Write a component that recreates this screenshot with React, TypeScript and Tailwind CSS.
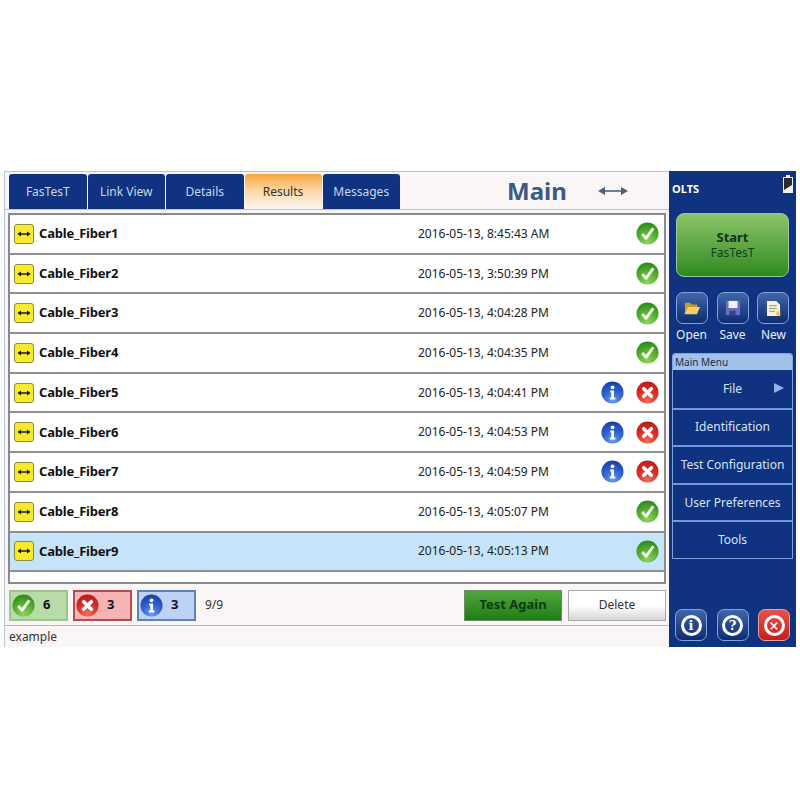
import React from 'react';

const FONT = 'font-["Noto_Sans","DejaVu_Sans",sans-serif]';

const tabs = ['FasTesT', 'Link View', 'Details', 'Results', 'Messages'];

const rows = [
  { name: 'Cable_Fiber1', date: '2016-05-13, 8:45:43 AM', ok: true },
  { name: 'Cable_Fiber2', date: '2016-05-13, 3:50:39 PM', ok: true },
  { name: 'Cable_Fiber3', date: '2016-05-13, 4:04:28 PM', ok: true },
  { name: 'Cable_Fiber4', date: '2016-05-13, 4:04:35 PM', ok: true },
  { name: 'Cable_Fiber5', date: '2016-05-13, 4:04:41 PM', ok: false },
  { name: 'Cable_Fiber6', date: '2016-05-13, 4:04:53 PM', ok: false },
  { name: 'Cable_Fiber7', date: '2016-05-13, 4:04:59 PM', ok: false },
  { name: 'Cable_Fiber8', date: '2016-05-13, 4:05:07 PM', ok: true },
  { name: 'Cable_Fiber9', date: '2016-05-13, 4:05:13 PM', ok: true },
];

const menu = ['File', 'Identification', 'Test Configuration', 'User Preferences', 'Tools'];

function Ball({ id, light, mid, dark, children }: { id: string; light: string; mid: string; dark: string; children: React.ReactNode }) {
  return (
    <svg viewBox="0 0 24 24" className="w-[23px] h-[23px] shrink-0">
      <defs>
        <radialGradient id={id} cx="50%" cy="88%" r="85%">
          <stop offset="0%" stopColor={light} />
          <stop offset="55%" stopColor={mid} />
          <stop offset="100%" stopColor={dark} />
        </radialGradient>
      </defs>
      <circle cx="12" cy="12" r="11.5" fill={`url(#${id})`} />
      {children}
    </svg>
  );
}

function OkIcon() {
  return (
    <Ball id="ok" light="#8fd35a" mid="#55b02f" dark="#2f8a1f">
      <path d="M6.5 12.5l4 4.5 7.5-10.5" fill="none" stroke="#fff" strokeWidth="3" strokeLinejoin="round" opacity="0.95" />
    </Ball>
  );
}

function FailIcon() {
  return (
    <Ball id="fail" light="#f26a5c" mid="#d9322a" dark="#b71c1c">
      <path d="M8 8l8 8M16 8l-8 8" stroke="#fff" strokeWidth="3.6" strokeLinecap="round" />
    </Ball>
  );
}

function InfoIcon() {
  return (
    <Ball id="info" light="#6a9bf0" mid="#2f62d0" dark="#1a3fa8">
      <circle cx="12" cy="6.6" r="2" fill="#fff" />
      <path d="M9.6 10h3.9v7.2h1.5v2H9.2v-2h1.5v-5.2H9.6z" fill="#fff" />
    </Ball>
  );
}

function CableTag() {
  return (
    <div className="w-[20px] h-[20px] shrink-0 rounded-[3px] border border-[#8a8a40] bg-[#fbe92e] flex items-center justify-center">
      <svg viewBox="0 0 14 8" className="w-[14px] h-[8px]">
        <path d="M3 4h8" stroke="#111" strokeWidth="1.4" />
        <path d="M0.5 4L4 1.4v5.2zM13.5 4L10 1.4v5.2z" fill="#111" />
      </svg>
    </div>
  );
}

function FolderIcon() {
  return (
    <svg viewBox="0 0 20 18" className="w-[18px] h-[16px]">
      <path d="M2 3h6l1.5 2H16v3H5L2 15z" fill="#c99a2e" />
      <path d="M5 8h14l-3.5 8H1.5z" fill="#f5cf62" />
    </svg>
  );
}

function SaveIcon() {
  return (
    <svg viewBox="0 0 18 18" className="w-[16px] h-[16px]">
      <path d="M1 1h16v16H1z" fill="#6a6fc4" />
      <path d="M4 1h10v8H4z" fill="#f2f2fa" />
      <path d="M5 12h7v5H5z" fill="#3d3f8c" />
    </svg>
  );
}

function NewIcon() {
  return (
    <svg viewBox="0 0 16 18" className="w-[15px] h-[17px]">
      <path d="M1 1h10l4 4v12H1z" fill="#f4f1dc" />
      <path d="M3.5 6h8M3.5 9h8M3.5 12h6" stroke="#8f8f78" strokeWidth="1" />
      <path d="M13 12v5M10.5 14.5h5" stroke="#e8c330" strokeWidth="1.8" />
    </svg>
  );
}

function SquareButton({ red, children }: { red?: boolean; children: React.ReactNode }) {
  return (
    <div
      className={`w-[32px] h-[32px] rounded-[7px] border flex items-center justify-center ${
        red
          ? 'border-[#e8a0a0] bg-gradient-to-b from-[#e8504a] to-[#c81a1a]'
          : 'border-[#7fa4dc] bg-gradient-to-b from-[#3f66ac] to-[#0d2c70]'
      }`}
    >
      {children}
    </div>
  );
}

function RingGlyph({ glyph }: { glyph: string }) {
  return (
    <div className={`w-[21px] h-[21px] rounded-full border-[3px] border-white bg-transparent flex items-center justify-center text-white text-[13px] font-bold leading-none font-["DejaVu_Serif",serif]`}>
      {glyph}
    </div>
  );
}

function Badge({ cls, count, children }: { cls: string; count: number; children: React.ReactNode }) {
  return (
    <div className={`w-[59px] h-[31px] border-2 flex items-center pl-[1px] gap-[8px] ${cls}`}>
      {children}
      <span className="text-[13px] font-bold text-[#111]">{count}</span>
    </div>
  );
}

export default function App() {
  return (
    <div className={`w-[800px] h-[800px] bg-white pt-[171px] pl-[4px] ${FONT}`}>
      <div className="w-[792px] h-[476px] flex">
        <div className="w-[665px] h-full bg-[#faf5f7] flex flex-col border-l border-t border-[#b8c4d8]">
          {/* tabs + title */}
          <div className="h-[38px] shrink-0 flex items-end pl-[4px] border-b border-[#c4c4c8]">
            <div className="flex gap-[1px] h-[35px]">
              {tabs.map((tab) =>
                tab === 'Results' ? (
                  <div key={tab} className="w-[77px] flex items-center justify-center rounded-t-[3px] bg-gradient-to-b from-[#f7a536] via-[#fbd9a8] to-[#f9f5f2] text-[12px] text-[#333]">
                    {tab}
                  </div>
                ) : (
                  <div key={tab} className="w-[77.5px] flex items-center justify-center rounded-t-[3px] bg-[#0f3380] text-[12px] text-[#c9d6ea]">
                    {tab}
                  </div>
                )
              )}
            </div>
            <div className="flex-1 h-full flex items-center relative">
              <span className="ml-[107px] text-[24px] font-bold text-[#3a5a85] leading-none">Main</span>
              <svg viewBox="0 0 30 10" className="w-[30px] h-[10px] ml-[31px]">
                <path d="M4 5h22" stroke="#4a6078" strokeWidth="1.6" />
                <path d="M0 5l7-4v8zM30 5l-7-4v8z" fill="#4a6078" />
              </svg>
            </div>
          </div>

          {/* results list */}
          <div className="mt-[3px] ml-[3px] w-[658px] h-[371px] shrink-0 bg-white border-2 border-[#8a8a8a]">
            {rows.map((row, i) => (
              <div
                key={row.name}
                className={`h-[39.7px] border-b-2 border-[#8f8f8f] flex items-center pl-[4px] pr-[5px] ${
                  i === 8 ? 'bg-[#c5e3f9]' : 'bg-white'
                }`}
              >
                <CableTag />
                <span className="ml-[5px] text-[13px] font-bold text-[#111] tracking-[-0.2px]">{row.name}</span>
                <span className="ml-auto text-[12px] text-[#222] w-[183px]">{row.date}</span>
                <div className="w-[34px] flex justify-start">{!row.ok && <InfoIcon />}</div>
                <div className="w-[24px] flex justify-end">{row.ok ? <OkIcon /> : <FailIcon />}</div>
              </div>
            ))}
          </div>

          {/* summary bar */}
          <div className="h-[42px] shrink-0 flex items-center pl-[4px] pr-[3px] pt-[1px] border-b border-[#b4b4bc]">
            <div className="flex gap-[5px]">
              <Badge cls="bg-[#b8dca8] border-[#9cc48c]" count={6}><OkIcon /></Badge>
              <Badge cls="bg-[#f6b4b4] border-[#b84c4c]" count={3}><FailIcon /></Badge>
              <Badge cls="bg-[#bdd2f4] border-[#5c84b8]" count={3}><InfoIcon /></Badge>
            </div>
            <span className="ml-[9px] text-[12px] text-[#333]">9/9</span>
            <div className="ml-auto flex gap-[6px]">
              <div className="w-[98px] h-[31px] flex items-center justify-center border border-[#6f8a6a] bg-gradient-to-b from-[#4fa83a] to-[#1d7d14] text-[13px] font-bold text-[#0f3a12]">
                Test Again
              </div>
              <div className="w-[98px] h-[31px] flex items-center justify-center border border-[#a8a8a8] bg-gradient-to-b from-white via-white to-[#d6d6d6] text-[12px] text-[#333]">
                Delete
              </div>
            </div>
          </div>

          {/* status line */}
          <div className="flex-1 flex items-center pl-[4px] text-[12px] text-[#333]">example</div>
        </div>

        {/* right panel */}
        <div className="w-[127px] h-full bg-[#0f3380] flex flex-col">
          <div className="h-[42px] shrink-0 flex items-start justify-between pl-[3px] pr-[3px] pt-[4px]">
            <span className="mt-[6px] text-[11px] font-bold text-white">OLTS</span>
            <svg viewBox="0 0 10 18" className="w-[10px] h-[18px]">
              <path d="M3 0h4v2h3v16H0V2h3z" fill="#f0f0f0" />
              <path d="M1 3h8v7L1 15z" fill="#2a2a2a" />
            </svg>
          </div>
          <div className="mx-[7px] h-[64px] shrink-0 rounded-[8px] border border-[#9cc4a8] bg-gradient-to-b from-[#8cc56a] to-[#2c8a1c] flex flex-col items-center justify-center">
            <span className="text-[13px] font-bold text-[#123418] leading-[16px]">Start</span>
            <span className="text-[12px] text-[#123e1c] leading-[16px]">FasTesT</span>
          </div>
          <div className="mt-[15px] px-[7px] flex justify-between shrink-0">
            <SquareButton><FolderIcon /></SquareButton>
            <SquareButton><SaveIcon /></SquareButton>
            <SquareButton><NewIcon /></SquareButton>
          </div>
          <div className="mt-[2px] pl-[2px] pr-[2px] flex justify-between shrink-0 text-[12px] text-[#e8eef8] leading-[18px]">
            <span className="w-[41px] text-center">Open</span>
            <span className="w-[41px] text-center">Save</span>
            <span className="w-[41px] text-center">New</span>
          </div>
          <div className="mt-[9px] mx-[3px] shrink-0 border border-[#7ea4e0] rounded-t-[3px]">
            <div className="h-[16px] bg-[#a2c1e8] text-[10px] text-[#1c2c4c] pl-[2px] leading-[16px] rounded-t-[2px]">Main Menu</div>
            {menu.map((item, i) => (
              <div
                key={item}
                className={`h-[37.6px] relative flex items-center justify-center text-[12px] text-[#d6e2f4] ${
                  i > 0 ? 'border-t-2 border-[#6f9ade]' : ''
                }`}
              >
                {item}
                {item === 'File' && (
                  <svg viewBox="0 0 10 10" className="w-[10px] h-[10px] absolute right-[8px] top-[13px]">
                    <path d="M0 0l10 5-10 5z" fill="#8fb4ea" />
                  </svg>
                )}
              </div>
            ))}
          </div>
          <div className="mt-auto mb-[6px] px-[6px] flex justify-between shrink-0">
            <SquareButton><RingGlyph glyph="i" /></SquareButton>
            <SquareButton><RingGlyph glyph="?" /></SquareButton>
            <SquareButton red><RingGlyph glyph="×" /></SquareButton>
          </div>
        </div>
      </div>
    </div>
  );
}
